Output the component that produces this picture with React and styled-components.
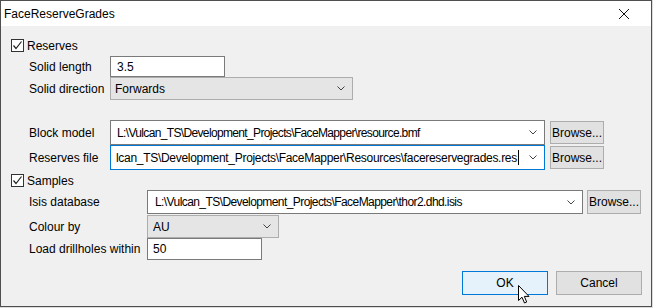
import React from "react";
import styled, { createGlobalStyle } from "styled-components";

const Global = createGlobalStyle`
  html, body { margin: 0; padding: 0; background: #dcdcdc; }
  body { font-family: "Liberation Sans", Arial, sans-serif; font-size: 12px; color: #000; }
`;

const Window = styled.div`
  width: 652px;
  height: 307px;
  box-sizing: border-box;
  border: 1px solid #4f4f4f;
  background: #f0f0f0;
  display: flex;
  flex-direction: column;
  position: relative;
`;

const TitleBar = styled.div`
  height: 25px;
  background: #fff;
  display: flex;
  align-items: center;
  justify-content: space-between;
  padding: 0 0 0 3px;
  font-size: 12px;
`;

const CloseBtn = styled.div`
  width: 46px;
  height: 25px;
  display: flex;
  align-items: center;
  justify-content: center;
  margin-right: 4px;
`;

const Body = styled.div`
  flex: 1;
  display: flex;
  flex-direction: column;
  padding-left: 10px;
`;

const CheckRow = styled.label`
  display: flex;
  align-items: center;
  height: 13px;
  margin-top: ${p => p.mt}px;
  gap: 3px;
`;

const Box = styled.span`
  width: 11px;
  height: 11px;
  border: 1px solid #333;
  background: #fff;
  display: flex;
  align-items: center;
  justify-content: center;
`;

const Row = styled.div`
  display: flex;
  align-items: center;
  margin-top: ${p => p.mt || 0}px;
  padding-left: 18px;
`;

const Label = styled.div`
  width: ${p => p.w}px;
  flex: none;
  white-space: nowrap;
`;

const Field = styled.div`
  box-sizing: border-box;
  width: ${p => p.w}px;
  height: ${p => p.h}px;
  border: 1px solid ${p => (p.focus ? "#0078d7" : p.gray ? "#adadad" : "#7a7a7a")};
  background: ${p => (p.gray ? "#e5e5e5" : "#fff")};
  display: flex;
  align-items: center;
  padding-left: ${p => p.pl || 6}px;
  padding-right: 7px;
  overflow: hidden;
  white-space: nowrap;
  flex: none;
`;

const FieldText = styled.span`
  flex: 1;
  overflow: hidden;
  display: flex;
  align-items: center;
  letter-spacing: ${p => p.ls || 0}px;
`;

const Caret = styled.span`
  width: 1px;
  height: 15px;
  background: #000;
  margin-left: 1px;
  flex: none;
`;

const Button = styled.button`
  box-sizing: border-box;
  width: ${p => p.w}px;
  height: ${p => p.h}px;
  margin-left: ${p => p.ml || 0}px;
  border: 1px solid ${p => (p.hot ? "#0078d7" : "#adadad")};
  background: ${p => (p.hot ? "#e5f1fb" : "#e1e1e1")};
  font-family: inherit;
  font-size: 12px;
  color: #000;
  padding: 0;
  flex: none;
`;

const Footer = styled.div`
  display: flex;
  justify-content: flex-end;
  margin-top: 11px;
  padding-right: 9px;
  gap: 8px;
`;

const Pointer = styled.svg`
  position: absolute;
  left: 517px;
  top: 284px;
`;

const Chevron = () => (
  <svg width="8" height="5" viewBox="0 0 8 5" style={{ flex: "none" }}>
    <polyline points="0.5,0.5 4,4 7.5,0.5" fill="none" stroke="#444" strokeWidth="1" />
  </svg>
);

const Check = () => (
  <svg width="11" height="11" viewBox="0 0 11 11">
    <polyline points="1.5,5.5 4,8.5 9.5,1.5" fill="none" stroke="#222" strokeWidth="1.2" />
  </svg>
);

const Combo = ({ w, h, gray, focus, caret, pl, ls, children }) => (
  <Field w={w} h={h} gray={gray} focus={focus} pl={pl}>
    <FieldText ls={ls}>
      {children}
      {caret && <Caret />}
    </FieldText>
    <Chevron />
  </Field>
);

export default function App() {
  return (
    <>
      <Global />
      <Window>
        <TitleBar>
          <span>FaceReserveGrades</span>
          <CloseBtn>
            <svg width="10" height="10" viewBox="0 0 10 10">
              <path d="M0 0L10 10M10 0L0 10" stroke="#111" strokeWidth="1" />
            </svg>
          </CloseBtn>
        </TitleBar>
        <Body>
          <CheckRow mt={13}>
            <Box><Check /></Box>
            <span>Reserves</span>
          </CheckRow>
          <Row mt={4}>
            <Label w={81}>Solid length</Label>
            <Field w={115} h={21}>3.5</Field>
          </Row>
          <Row>
            <Label w={81}>Solid direction</Label>
            <Combo w={243} h={23} gray pl={4}>Forwards</Combo>
          </Row>
          <Row mt={20}>
            <Label w={81}>Block model</Label>
            <Combo w={435} h={25} ls={-0.65}>L:\Vulcan_TS\Development_Projects\FaceMapper\resource.bmf</Combo>
            <Button w={54} h={23} ml={5}>Browse...</Button>
          </Row>
          <Row>
            <Label w={81}>Reserves file</Label>
            <Combo w={435} h={25} focus caret pl={5} ls={-0.3}>
              lcan_TS\Development_Projects\FaceMapper\Resources\facereservegrades.res
            </Combo>
            <Button w={54} h={23} ml={5}>Browse...</Button>
          </Row>
          <CheckRow mt={4}>
            <Box><Check /></Box>
            <span>Samples</span>
          </CheckRow>
          <Row mt={3}>
            <Label w={118}>Isis database</Label>
            <Combo w={436} h={24} pl={7} ls={-0.58}>L:\Vulcan_TS\Development_Projects\FaceMapper\thor2.dhd.isis</Combo>
            <Button w={54} h={24} ml={4}>Browse...</Button>
          </Row>
          <Row mt={1}>
            <Label w={118}>Colour by</Label>
            <Combo w={132} h={23} gray pl={5}>AU</Combo>
          </Row>
          <Row>
            <Label w={118}>Load drillholes within</Label>
            <Field w={115} h={22} pl={5}>50</Field>
          </Row>
          <Footer>
            <Button w={86} h={24} hot>OK</Button>
            <Button w={86} h={24}>Cancel</Button>
          </Footer>
        </Body>
        <Pointer width="12" height="19" viewBox="0 0 12 19">
          <path
            d="M0.5 0.5 L0.5 15.5 L4 12.2 L6.5 18 L8.7 17 L6.3 11.4 L11 11.4 Z"
            fill="#fff"
            stroke="#000"
            strokeWidth="1"
            strokeLinejoin="miter"
          />
        </Pointer>
      </Window>
    </>
  );
}
